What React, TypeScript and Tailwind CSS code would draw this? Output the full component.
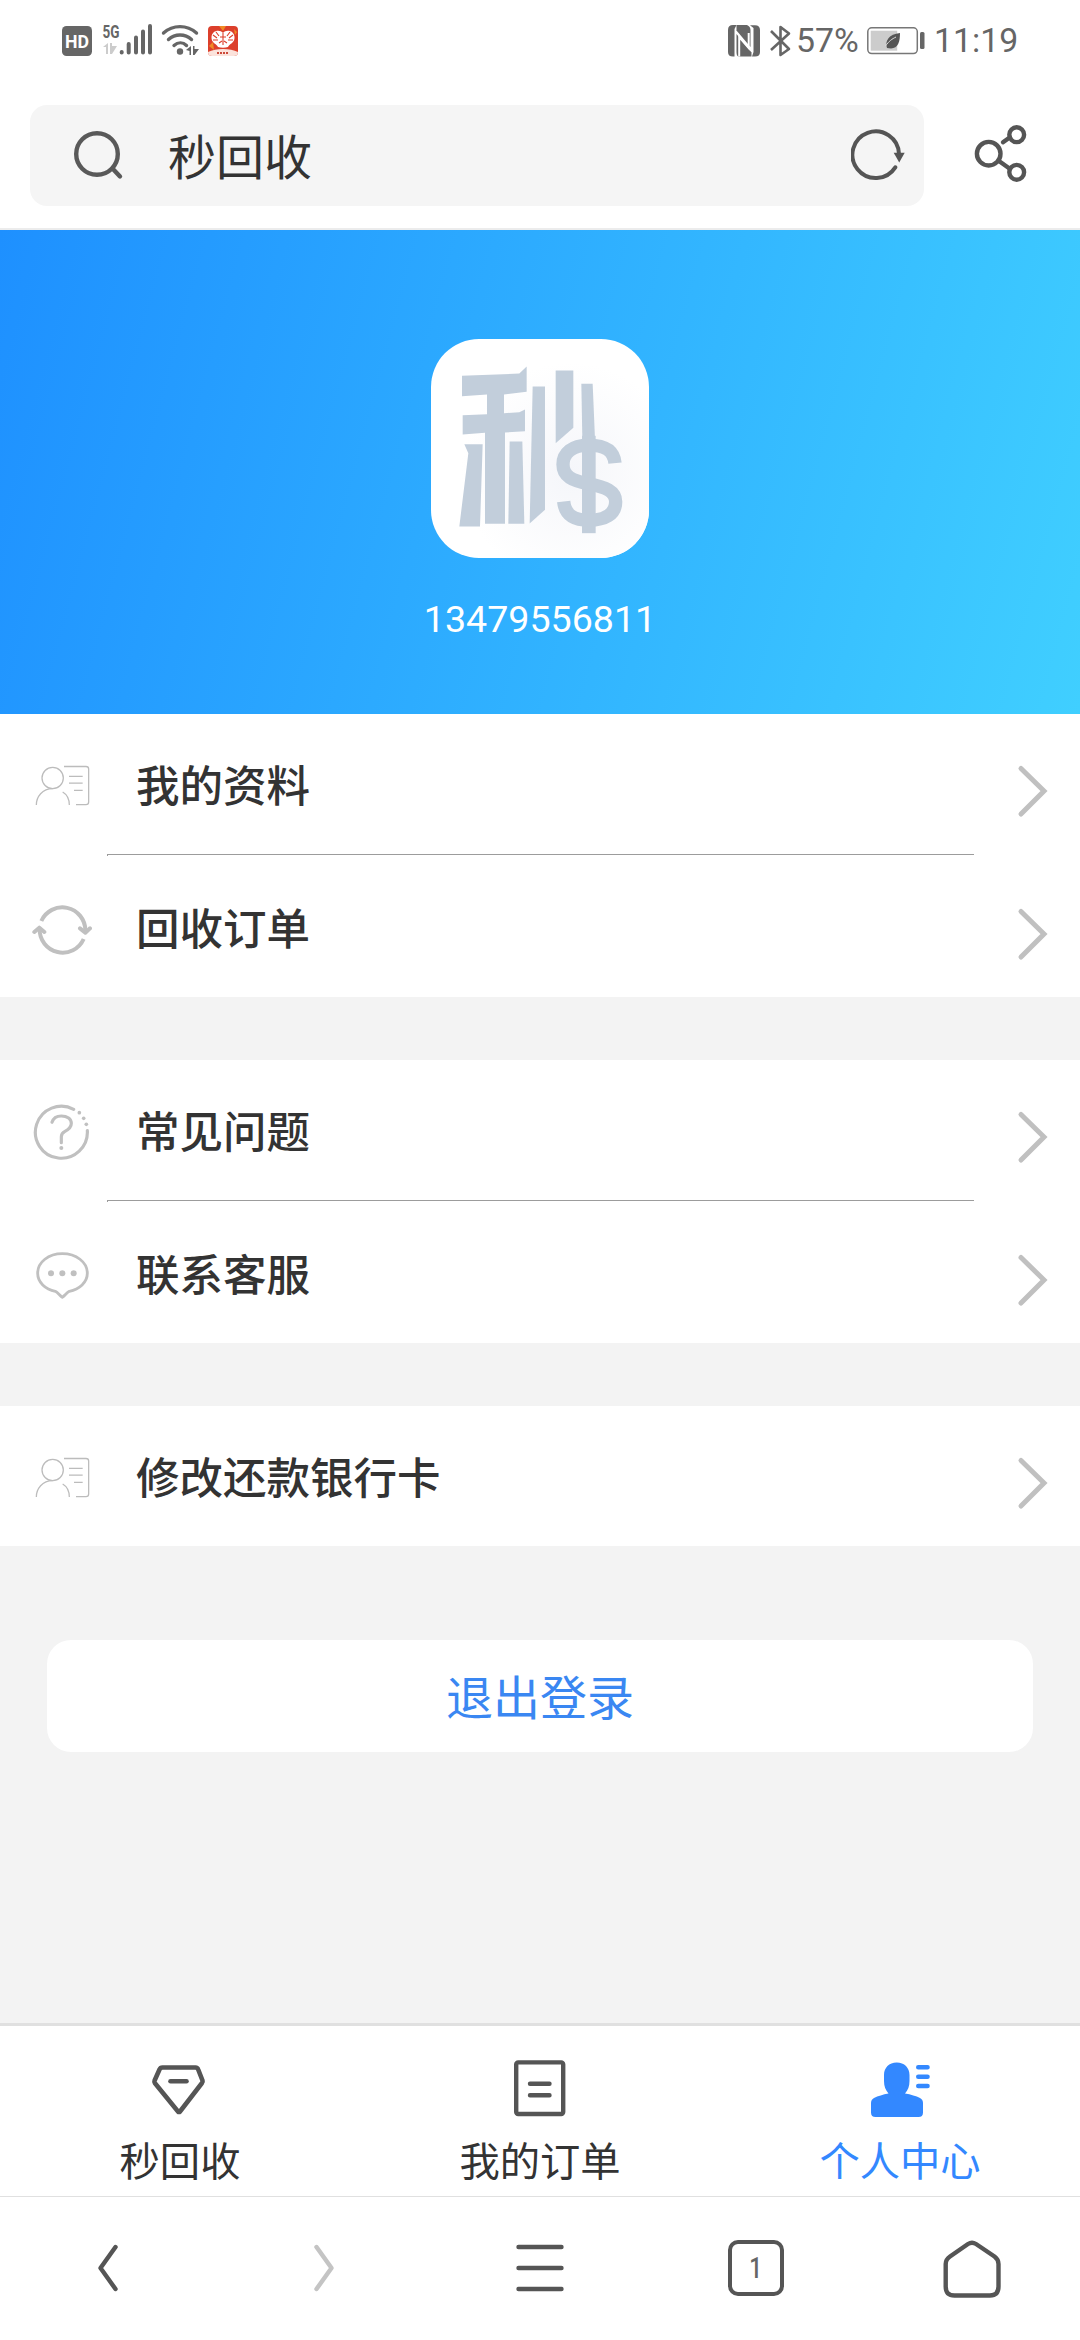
import React from 'react';

type MenuItem = {
  label: string;
  icon: React.ReactNode;
};

const ProfileIcon = () => (
  <svg viewBox="0 0 180 180" className="w-[60px] h-[60px]" fill="none" stroke="#bcbcbc" strokeWidth="3.8">
    <circle cx="62" cy="72" r="32" />
    <path d="M13 153C13 128 31 104 62 104M92 114C104 121 112 136 112 153" />
    <path d="M96 37.5H162Q170 37.5 170 45V144Q170 152 162 152H132" />
    <path d="M111 67H152M111 87.5H152M126 109H152" />
  </svg>
);

const RecycleIcon = () => (
  <svg viewBox="0 0 180 180" className="w-[60px] h-[60px]" fill="none" stroke="#c0c0c0" strokeWidth="12" strokeLinecap="round" strokeLinejoin="round">
    <path d="M28 72A69 69 0 0 1 160 100M155 126A69 69 0 0 1 23 96" strokeLinecap="butt" />
    <path d="M144 94L160 107L174 94M7 105L22 92L37 105" />
  </svg>
);

const HelpIcon = () => (
  <svg viewBox="0 0 180 180" className="w-[60px] h-[60px]" fill="none" stroke="#c0c0c0" strokeWidth="9.5" strokeLinecap="round">
    <path d="M125 28A78 78 0 1 0 166 92" />
    <path d="M60 67C64 54 74 48 88 48C106 48 118 57 118 70C118 84 109 89 99 94C91 98 88 102 88 110V128" />
    <g fill="#c0c0c0" stroke="none">
      <circle cx="142" cy="38" r="5.5" />
      <circle cx="155" cy="55" r="5.5" />
      <circle cx="163" cy="73" r="5.5" />
      <circle cx="88" cy="144" r="6" />
    </g>
  </svg>
);

const ChatIcon = () => (
  <svg viewBox="0 0 180 180" className="w-[60px] h-[60px]" fill="none" stroke="#c0c0c0" strokeWidth="8.5" strokeLinejoin="round">
    <path d="M91 32C50 32 17 57 17 91C17 118 40 139 70 145C78 149 84 159 91 163C98 159 104 149 112 145C142 139 166 118 166 91C166 57 132 32 91 32Z" />
    <g fill="#c0c0c0" stroke="none">
      <circle cx="57" cy="91" r="9" />
      <circle cx="91" cy="91" r="9" />
      <circle cx="125" cy="91" r="9" />
    </g>
  </svg>
);

const GROUPS: MenuItem[][] = [
  [
    { label: '我的资料', icon: <ProfileIcon /> },
    { label: '回收订单', icon: <RecycleIcon /> }
  ],
  [
    { label: '常见问题', icon: <HelpIcon /> },
    { label: '联系客服', icon: <ChatIcon /> }
  ],
  [{ label: '修改还款银行卡', icon: <ProfileIcon /> }]
];

const StatusBar = () => (
  <div className="flex items-center h-[82px] pl-[62px] pr-[60px] text-[#666]">
    <svg viewBox="0 0 30 30" className="w-[30px] h-[30px]">
      <rect width="30" height="30" rx="4.5" fill="#666" />
      <text x="15" y="21.8" textAnchor="middle" textLength="24" lengthAdjust="spacingAndGlyphs" fontFamily="Roboto" fontWeight="700" fontSize="19" fill="#fff">HD</text>
    </svg>
    <svg viewBox="0 -6 52 40" className="w-[52px] h-[40px] ml-[10px] -mt-2.5" fill="#666">
      <text x="0.5" y="16" textLength="17" lengthAdjust="spacingAndGlyphs" fontFamily="Roboto" fontWeight="700" fontSize="19">5G</text>
      <path d="M1 25L6 21V32H4V25ZM8 21H10V24H15L10 32H8Z" fill="#ccc" />
      <path d="M19.7 30.5V30M26.7 30.5V22M34 30.5V15.5M41 30.5V9.5M48 30.5V4" stroke="#666" strokeWidth="4" strokeLinecap="round" />
    </svg>
    <svg viewBox="0 0 40 34" className="w-[40px] h-[34px] ml-[7px] -mt-1" fill="none" stroke="#666" strokeWidth="3.4" strokeLinecap="round">
      <path d="M2.5 11C12 2.5 26 2.5 35.5 11M7.5 17.5C14 11.5 24 11.5 30.5 17.5M13 23.5C17 20 22 20 25.5 23.5" />
      <circle cx="19" cy="29.5" r="3.2" fill="#666" stroke="none" />
      <path d="M25 28L30 24V33H28.5V29ZM32 24H33.5V27H38L33.5 33H32Z" fill="#666" stroke="none" />
    </svg>
    <svg viewBox="0 0 30 30" className="w-[30px] h-[30px] ml-[7px]">
      <rect width="30" height="30" rx="4" fill="#dc3f2b" />
      <path d="M11 0H18L15 5ZM26 3L29 6L27 9ZM1 20L5 16L6 24Z" fill="#f08a24" />
      <path d="M15 7C12 3 4 4 3.5 11C3 17 9 18 10 21C13 22 17 22 20 21C21 18 27 17 26.5 11C26 4 18 3 15 7Z" fill="#fff" />
      <path d="M5 9L9 12M8 6L11 10M5 14L10 14M25 9L21 12M22 6L19 10M25 14L20 14M11 17L14 15M19 17L16 15M15 7V19M12 11H18" stroke="#dc3f2b" strokeWidth="1.1" />
      <path d="M0 26C8 22 22 22 30 26Q30 30 26 30H4Q0 30 0 26Z" fill="#fbe3dc" />
      <path d="M9 27H21" stroke="#cc4a3a" strokeWidth="2" strokeDasharray="2 1" />
    </svg>

    <svg viewBox="0 0 32 32" className="w-[32px] h-[32px] ml-auto" fill="#666">
      <path d="M5 0H8.500L6.500 4V31.500H5Q0 31.500 0 27V5Q0 0 5 0Z" />
      <path d="M27 31.500H24L25.500 27V3L22 0.300H27Q32 0.300 32 5V27Q32 31.500 27 31.500Z" />
      <path d="M8.500 0H19Q22.500 1.500 22.500 5V22L8.500 5.500Z" />
      <path d="M8.500 9L23.500 27.500V31.500H11Q8.500 31.500 8.500 27Z" />
      <path d="M11.200 31.500V12L20.700 23V8" fill="none" stroke="#fff" strokeWidth="2" />
    </svg>
    <svg viewBox="0 0 22 32" className="w-[22px] h-[32px] ml-[9px]" fill="none" stroke="#666" strokeWidth="2.6" strokeLinejoin="round">
      <path d="M2 6L20 24L11.5 30V2L20 8.5L2 25" />
    </svg>
    <span className="ml-[5px] w-[64px] font-[Roboto] text-[33.8px] leading-none whitespace-nowrap">57%</span>
    <svg viewBox="0 0 58 28" className="w-[58px] h-[28px] ml-[7px] -mt-px">
      <rect x="0.8" y="0.8" width="49.5" height="25.8" rx="4" fill="#fff" stroke="#777" strokeWidth="1.5" />
      <rect x="3.7" y="3.7" width="26.5" height="20" fill="#ccc" />
      <path d="M33 6C33 15 31 21 24 21.5L20 21C17.5 14 22 7 33 6Z" fill="#555" />
      <path d="M18.5 19C22 14 25 12 29 10" stroke="#ddd" strokeWidth="1" fill="none" />
      <rect x="53" y="5" width="4.5" height="17" rx="1.5" fill="#666" />
    </svg>
    <span className="ml-[9px] w-[86px] font-[Roboto] text-[33.8px] leading-none">11:19</span>
  </div>
);

const AddressBar = () => (
  <div className="flex items-start h-[148px] pt-[23px] pl-[30px] border-b-2 border-[#ececec]">
    <div className="flex items-center w-[894px] h-[101px] rounded-[17px] bg-[#f5f5f5]">
      <svg viewBox="0 0 52 52" className="w-[52px] h-[52px] ml-[42px]" fill="none" stroke="#595959" strokeWidth="4.4" strokeLinecap="round">
        <circle cx="25" cy="24" r="20.8" />
        <path d="M40.5 38.5L48 46.5" />
      </svg>
      <span className="ml-[44px] -mt-[3px] text-[48px] leading-[60px] text-[#333]">秒回收</span>
      <svg viewBox="0 0 56 56" className="w-[56px] h-[56px] ml-auto mr-[17px]" fill="none" stroke="#555" strokeWidth="4" strokeLinecap="round">
        <path d="M48 26A23.3 23.3 0 1 0 44.3 39.3" />
        <path d="M42.7 24.7H53.7L48.2 34.5Z" fill="#555" stroke="none" />
      </svg>
    </div>
    <svg viewBox="0 0 54 60" className="w-[54px] h-[60px] ml-[50px] mt-[19px]" fill="none" stroke="#555" strokeWidth="4.4" strokeLinecap="round">
      <circle cx="14.7" cy="29.7" r="11.8" />
      <circle cx="42.7" cy="10.7" r="7.4" />
      <circle cx="42.7" cy="48.3" r="7.4" />
      <path d="M29 18.3L36 13.2M25.3 37.3L35.8 44.7" />
    </svg>
  </div>
);

const Logo = () => (
  <svg viewBox="0 0 654 656" className="w-[218px] h-[219px] rounded-[48px] bg-white" fill="#c2cedb">
    <defs>
      <radialGradient id="glow">
        <stop offset="0" stopColor="#f5f6fa" />
        <stop offset="1" stopColor="#fff" />
      </radialGradient>
    </defs>
    <circle cx="420" cy="400" r="330" fill="url(#glow)" />
    <path d="M93 110L265 103L287 82V158L219 166V222L265 219L282 211V276L222 280V554H162V281L95 286V228L168 225V166L93 171Z" />
    <path d="M100 315H155L147 562H85L112 342Z" />
    <path d="M236 307H274L280 554H232Z" />
    <path d="M305 142H342V512L296 553Z" />
    <path d="M374 94H427V266L374 312Z" />
    <path d="M451 134H485L492 300H454Z" />
    <rect x="453" y="290" width="41" height="292" />
    <path d="M552 372C548 332 520 318 472 318C424 318 396 342 396 376C396 412 424 424 472 434C524 444 554 456 554 488C554 526 522 543 474 543C424 543 402 524 398 487" fill="none" stroke="#c2cedb" strokeWidth="40" />
  </svg>
);

const MenuRow: React.FC<{ item: MenuItem }> = ({ item }) => (
  <div className="flex items-center h-[140px] pl-[32px] pr-[31px]">
    {item.icon}
    <span className="ml-[44px] text-[43.5px] leading-[60px] font-medium text-[#333]">{item.label}</span>
    <svg viewBox="0 0 32 54" className="w-[32px] h-[54px] ml-auto mt-[14px]" fill="none" stroke="#c0c0c0" strokeWidth="5" strokeLinecap="round">
      <path d="M4 4.500L27 27L4 50" />
    </svg>
  </div>
);

const TabBar = () => (
  <div className="grid grid-cols-3 h-[174px] bg-white border-t-[3px] border-b border-t-[#e0e0e0] border-b-[#e0e0e0] text-[40.3px] leading-[48px] text-[#333]">
    <div className="flex flex-col items-center pt-[32px]">
      <svg viewBox="0 0 60 60" className="w-[60px] h-[60px]" fill="none" stroke="#555" strokeWidth="4.6" strokeLinecap="round" strokeLinejoin="round">
        <path d="M12.500 9.500H45.500Q47.500 9.500 48.200 11.500L52.500 22.500Q53 24 52 25L30 53.500Q29 54.500 28 53.500L4.800 25Q4 24 4.600 22.500L9.500 11.500Q10.300 9.500 12.500 9.500Z" />
        <path d="M20.5 23.3H36.5" />
      </svg>
      <span className="mt-[17px]">秒回收</span>
    </div>
    <div className="flex flex-col items-center pt-[32px]">
      <svg viewBox="0 0 60 60" className="w-[60px] h-[60px]" fill="none" stroke="#555" strokeWidth="4.4" strokeLinecap="round">
        <rect x="6.2" y="4.4" width="47" height="51.6" rx="2" />
        <path d="M20 25.7H39.5M20 37.3H39.5" />
      </svg>
      <span className="mt-[17px]">我的订单</span>
    </div>
    <div className="flex flex-col items-center pt-[32px] text-[#3388ff]">
      <svg viewBox="0 0 60 60" className="w-[60px] h-[60px]" fill="#3388ff">
        <path d="M26.7 4.6C34.5 4.6 39.5 10 39.5 17V23C39.5 28.5 38 32 35 35.5C41 36.5 46 38 50 40Q53 41.5 53 45V54.5Q53 59 48.5 59H5.5Q1 59 1 54.5V45Q1 41.5 4 40C8 38 13 36.5 18.5 35.5C15.5 32 14 28.5 14 23V17C14 10 19 4.6 26.7 4.6Z" />
        <path d="M48.3 9.3H57.5M48.3 18.7H57.5M48.3 28H57.5" stroke="#3388ff" strokeWidth="4.6" strokeLinecap="round" />
      </svg>
      <span className="mt-[17px]">个人中心</span>
    </div>
  </div>
);

const BrowserNav = () => (
  <div className="grid grid-cols-5 place-items-center h-[143px] pb-[2px] bg-white">
    <svg viewBox="0 0 60 60" className="w-[60px] h-[60px]" fill="none" stroke="#555" strokeWidth="4.4" strokeLinecap="round" strokeLinejoin="round">
      <path d="M37.5 9L22.5 30L37.5 51" />
    </svg>
    <svg viewBox="0 0 60 60" className="w-[60px] h-[60px]" fill="none" stroke="#c4c4c4" strokeWidth="4.4" strokeLinecap="round" strokeLinejoin="round">
      <path d="M22.5 9L37.5 30L22.5 51" />
    </svg>
    <svg viewBox="0 0 60 60" className="w-[60px] h-[60px]" fill="none" stroke="#555" strokeWidth="4.4" strokeLinecap="round">
      <path d="M8.500 9H51.500M8.500 30H51.500M8.500 51H51.500" />
    </svg>
    <div className="flex items-center justify-center w-[56px] h-[56px] rounded-[10px] border-4 border-[#555] font-[Roboto] text-[30px] leading-none font-medium text-[#666]">
      <span className="scale-x-75">1</span>
    </div>
    <svg viewBox="0 0 60 60" className="w-[60px] h-[60px]" fill="none" stroke="#555" strokeWidth="4.4" strokeLinejoin="round">
      <path d="M26 6Q30 3.5 34 6L52.5 18.5Q56.5 21.5 56.5 26V48.5Q56.5 57.5 48 57.5H12.5Q3.7 57.5 3.7 48.5V26Q3.7 21.5 8 18.5Z" />
    </svg>
  </div>
);

const App: React.FC = () => {
  return (
    <div className="flex flex-col w-[1080px] h-[2340px] bg-white overflow-hidden font-['Noto_Sans_CJK_SC',sans-serif]">
      <StatusBar />
      <AddressBar />

      <div className="flex flex-col items-center h-[484px] pt-[109px] bg-[linear-gradient(105deg,#1e90ff_0%,#40cfff_100%)]">
        <Logo />
        <span className="mt-[39px] font-[Roboto] text-[37.6px] leading-[44px] text-white">13479556811</span>
      </div>

      <main className="flex-1 bg-[#f3f3f3]">
        {GROUPS.map((group, idx) => (
          <div key={idx} className="mb-[63px] bg-white">
            {group.map((item, i) => (
              <React.Fragment key={item.label}>
                {i > 0 && (
                  <div className="h-[3px] ml-[107px] w-[867px]">
                    <div className="h-[2px] border-t border-l border-[#9c9c9c]" />
                  </div>
                )}
                <MenuRow item={item} />
              </React.Fragment>
            ))}
          </div>
        ))}

        {/* Logout */}
        <button className="block w-[986px] h-[112px] pb-[3px] mx-auto mt-[94px] rounded-[24px] bg-white text-[47px] leading-[60px] text-[#3a87f2]">
          退出登录
        </button>
      </main>

      <TabBar />
      <BrowserNav />
    </div>
  );
};

export default App;
